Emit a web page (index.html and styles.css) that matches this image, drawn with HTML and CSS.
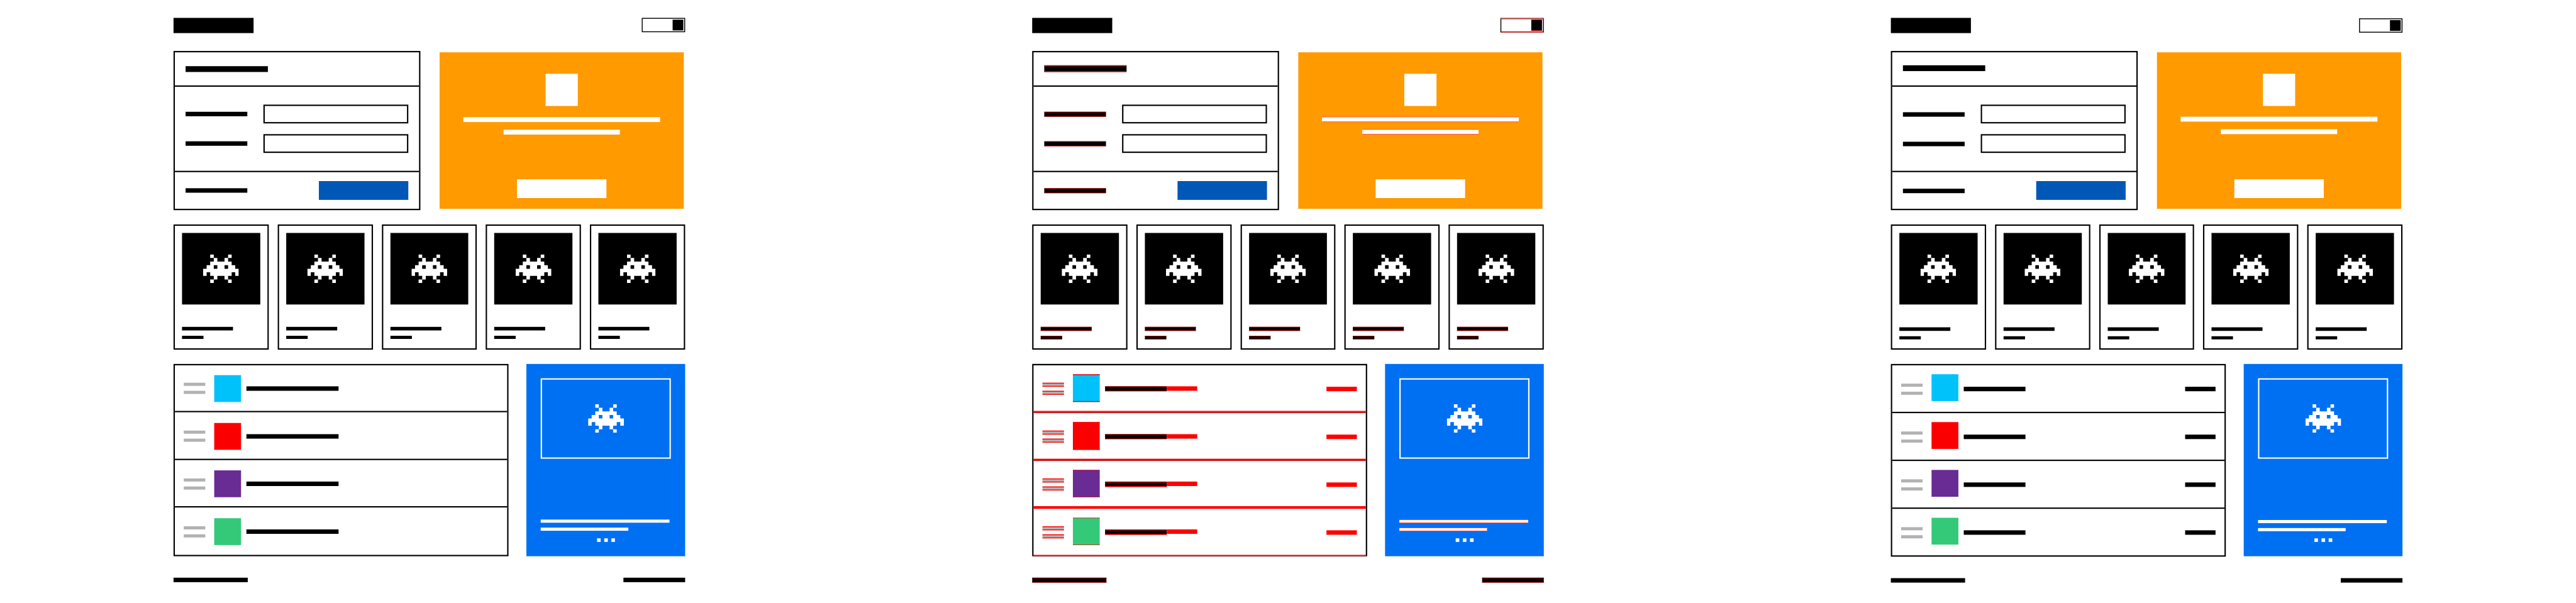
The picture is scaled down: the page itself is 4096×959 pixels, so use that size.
FILE: index.html
```html
<!DOCTYPE html>
<html lang="en">
<head>
<meta charset="utf-8">
<title>Wireframes</title>
<link rel="stylesheet" href="styles.css">
</head>
<body>
<svg class="defs" aria-hidden="true"><symbol id="alien" viewBox="0 0 10 8"><path fill-rule="evenodd" d="M2 0h1v1h1v1h2v-1h1v-1h1v1h-1v1h1v1h1v1h1v2h-1v-1h-1v1h-1v1h1v1h-1v-1h-1v-1h-2v1h-1v1h-1v-1h1v-1h-1v-1h-1v1h-1v-2h1v-1h1v-1h1v-1h-1zM3 3v1h1v-1zM6 3v1h1v-1z"/></symbol></svg>
<div class="viewport"><main class="stage" id="stage"></main></div>
<template id="page">
  <header class="top"><div class="logo"></div><div class="toggle"><div class="track"><div class="well"><div class="knob"></div></div></div></div></header>
  <section class="hero">
    <form class="panel">
      <div class="panel-head"><div class="bar title"></div></div>
      <div class="panel-body">
        <div class="field"><div class="bar label"></div><div class="input"></div></div>
        <div class="field"><div class="bar label"></div><div class="input"></div></div>
      </div>
      <div class="panel-foot"><div class="bar label"></div><div class="submit"></div></div>
    </form>
    <div class="promo"><div class="badge"></div><div class="bar line-a"></div><div class="bar line-b"></div><div class="cta"></div></div>
  </section>
  <section class="cards">
    <article class="card"><div class="thumb"><svg class="alien"><use href="#alien"/></svg></div><div class="bar name"></div><div class="bar price"></div></article>
    <article class="card"><div class="thumb"><svg class="alien"><use href="#alien"/></svg></div><div class="bar name"></div><div class="bar price"></div></article>
    <article class="card"><div class="thumb"><svg class="alien"><use href="#alien"/></svg></div><div class="bar name"></div><div class="bar price"></div></article>
    <article class="card"><div class="thumb"><svg class="alien"><use href="#alien"/></svg></div><div class="bar name"></div><div class="bar price"></div></article>
    <article class="card"><div class="thumb"><svg class="alien"><use href="#alien"/></svg></div><div class="bar name"></div><div class="bar price"></div></article>
  </section>
  <section class="lower">
    <div class="list">
      <div class="row"><div class="grip"><i></i><i></i></div><div class="swatch cyan"></div><div class="item"></div><div class="tail"></div><div class="value"></div></div>
      <div class="row"><div class="grip"><i></i><i></i></div><div class="swatch red"></div><div class="item"></div><div class="tail"></div><div class="value"></div></div>
      <div class="row"><div class="grip"><i></i><i></i></div><div class="swatch purple"></div><div class="item"></div><div class="tail"></div><div class="value"></div></div>
      <div class="row"><div class="grip"><i></i><i></i></div><div class="swatch green"></div><div class="item"></div><div class="tail"></div><div class="value"></div></div>
    </div>
    <aside class="feature">
      <div class="frame"><svg class="alien"><use href="#alien"/></svg></div>
      <div class="bar text-a"></div><div class="bar text-b"></div>
      <div class="dots"><i></i><i></i><i></i></div>
    </aside>
  </section>
  <footer class="bottom"><div class="bar foot-l"></div><div class="bar foot-r"></div></footer>
</template>
<script src="main.js"></script>
</body>
</html>
```
FILE: main.js
```js
const template = document.getElementById('page');
for (const state of ['before', 'diff', 'after']) {
  const page = document.createElement('article');
  page.className = 'page ' + state;
  page.append(template.content.cloneNode(true));
  document.getElementById('stage').append(page);
}
```
FILE: styles.css
```css
*, *::before, *::after { box-sizing: border-box; }
body { margin: 0; background: #fff; }
.defs { display: none; }

.viewport { width: 100%; height: 959px; overflow: clip; contain: strict; }

/* The unit u is one design pixel; the design is 5760 units wide. */
.stage {
  display: flex;
  width: 5760px;
  height: 1348px;
  transform: scale(0.711111);
  transform-origin: 0 0;
}

/* --shift: offset of the moved bars; --edge: thickness of the change marker */
.page {
  --shift: 0px;
  --edge: 0px;
  flex: 0 0 1920px;
  padding: 0 388px;
}
.page.diff { --edge: 1px; }
.page.after { --shift: 1px; }

.bar {
  flex: none;
  background: #000;
  border: 0 solid #f00;
  border-block-width: var(--edge);
}

/* header */
.top { display: flex; justify-content: space-between; align-items: flex-start; height: 114px; padding-top: 40px; }
.logo { width: 179px; height: 34px; background: #000; }
.toggle { width: 97px; margin-top: var(--shift); border: 0 solid #f00; }
.track { border: 2px solid #000; }
.well { display: flex; justify-content: flex-end; padding: 2px; }
.knob { width: 24px; height: 24px; background: #000; }
.diff .toggle { border-block-width: 1px; }
.diff .track { border-block-width: 1px; }
.diff .well { border: 0 solid #f00; border-block-width: 1px; padding-block: 1px; }
.diff .knob { height: 25px; border: 0 solid #f00; border-block-width: 1px; }

/* form and promo */
.hero { display: flex; align-items: flex-start; gap: 40px; height: 356px; }
.panel { width: 552px; height: 356px; border: 3px solid #000; }
.panel-head { height: 77px; padding: 31px 24px 0; border-bottom: 3px solid #000; }
.title { width: 184px; height: 13px; }
.after .panel-head, .diff .panel-head { padding-top: 29px; }
.diff .title { height: 15px; border-block-width: 2px; }
.panel-body { display: flex; flex-direction: column; gap: 24px; padding: 40px 24px; border-bottom: 3px solid #000; }
.field, .panel-foot { display: flex; justify-content: space-between; align-items: flex-start; }
.panel-foot { padding: 20px 24px; }
.label { width: 138px; height: calc(10px + var(--edge)); margin-top: calc(16px + var(--shift)); }
.input { width: 324px; height: 42px; border: 3px solid #000; }
.submit { width: 200px; height: 42px; background: #0057b5; }

.promo { display: flex; flex-direction: column; align-items: center; width: 546px; height: 350px; margin: 3px 0 0 3px; padding: 48px 0 24px; background: #ff9a00; }
.badge { width: 72px; height: 72px; background: #fff; }
.promo .bar, .feature .bar { background: #fff; }
.line-a { width: 440px; height: calc(11px + var(--edge)); margin-top: calc(25px - var(--shift) - var(--edge)); }
.line-b { width: 260px; height: calc(11px + var(--edge)); margin-top: calc(17px - var(--edge)); }
.cta { width: 200px; height: 42px; margin-top: auto; background: #fff; }

/* product cards */
.cards { display: grid; grid-template-columns: repeat(5, 1fr); gap: 20px; margin: 32px 0; }
.card { height: 280px; padding: 16px; border: 3px solid #000; }
.thumb { display: flex; align-items: center; justify-content: center; height: 160px; background: #000; }
.alien { display: block; width: 80px; height: 64px; fill: #fff; }
.name { width: 114px; height: calc(8px + var(--edge)); margin-top: calc(50px + var(--shift)); }
.price { width: 48px; height: calc(7px + var(--edge)); margin-top: calc(12px - var(--edge)); }

/* list */
.lower { display: flex; justify-content: space-between; align-items: flex-start; height: 430px; }
.list { width: 749px; border: 3px solid #000; }
.row {
  --mark: 0px;
  --item-mark: 0px;
  display: flex;
  align-items: flex-start;
  box-sizing: content-box;
  width: 703px;
  height: var(--h);
  padding: 0 20px;
  border-bottom: 3px solid #000;
}
.row:last-child { border-bottom: 0; }
.grip { display: grid; gap: 11px; width: 48px; margin-top: var(--grip); }
.grip i { height: 7px; background: #b2b2b2; }
.swatch { width: 60px; height: 60px; margin: var(--swatch) 12px 0 20px; border: 0 solid #f00; border-block-width: var(--mark); }
.diff .row:nth-child(1) .swatch, .diff .row:nth-child(2) .swatch { height: 62px; }
.diff .row:nth-child(3) .swatch, .diff .row:nth-child(4) .swatch { height: 61px; }
.cyan { background: #00c2fb; }
.red { background: #fa0000; }
.purple { background: #692b94; }
.green { background: #34c979; }
.item { width: 206px; height: 10px; margin-top: var(--item); background: #000; }
.tail, .value { display: none; width: 68px; height: 10px; background: #000; }
.value { margin: 48px 0 0 auto; }

.before .row:nth-child(1) { --h: 102px; --grip: 39px; --swatch: 22px; --item: 47px; }
.before .row:nth-child(2) { --h: 104px; --grip: 41px; --swatch: 24px; --item: 49px; }
.before .row:nth-child(3) { --h: 103px; --grip: 41px; --swatch: 23px; --item: 48px; }
.before .row:nth-child(4) { --h: 106px; --grip: 42px; --swatch: 24px; --item: 49px; }

.after .row { --h: 104px; --grip: 41px; --swatch: 20px; --item: 48px; }
.after .item, .diff .item { width: 138px; }
.after .value, .diff .value { display: block; }

/* changed rows: every separator is a 5px band, red / black / red */
.diff .list { border-bottom-width: 2px; box-shadow: 0 1px 0 #f00; }
.diff .row { --grip: 39px; --swatch: 20px; border-bottom: 0 solid #f00; }
.diff .row:nth-child(-n+2) { --h: 102px; --item: 47px; --mark: 2px; --item-mark: 1px; border-bottom-width: 2px; margin-bottom: 1px; box-shadow: 0 1px 0 #000; }
.diff .row:nth-child(2), .diff .row:nth-child(3) { border-top: 2px solid #f00; }
.diff .row:nth-child(3) { --h: 101px; --item: 46px; --mark: 1px; --item-mark: 2px; border-bottom-width: 6px; }
.diff .row:nth-child(4) { --h: 103px; --item: 46px; --mark: 1px; --item-mark: 2px; border-bottom: 1px solid #f00; }
.diff .grip { gap: 9px; }
.diff .grip i { height: 9px; border: 0 solid #f00; border-block-width: 2px; }
.diff .item { height: calc(10px + var(--item-mark)); border: 0 solid #f00; border-block-width: var(--item-mark); }
.diff .tail { display: block; margin-top: var(--item); background: #f00; }
.diff .value { background: #f00; }

/* feature */
.feature { display: flex; flex-direction: column; width: 355px; height: 430px; padding: 32px; background: #0070f3; }
.frame { display: flex; align-items: center; justify-content: center; flex: none; height: 180px; border: 3px solid #fff; }
.frame .alien { margin-left: 1px; }
.text-a { width: 288px; height: calc(7px + var(--edge)); margin-top: calc(136px + var(--shift)); }
.text-b { width: 196px; height: calc(7px + var(--edge)); margin-top: calc(11px - var(--edge)); }
.dots { display: flex; justify-content: center; gap: 8px; margin: auto 0 0 1px; }
.dots i { width: 8px; height: 8px; background: #fff; }

/* footer */
.bottom { display: flex; justify-content: space-between; margin-top: calc(48px + var(--shift)); }
.bottom .bar { height: calc(10px + var(--edge)); }
.foot-l { width: 166px; }
.foot-r { width: 138px; }
```
